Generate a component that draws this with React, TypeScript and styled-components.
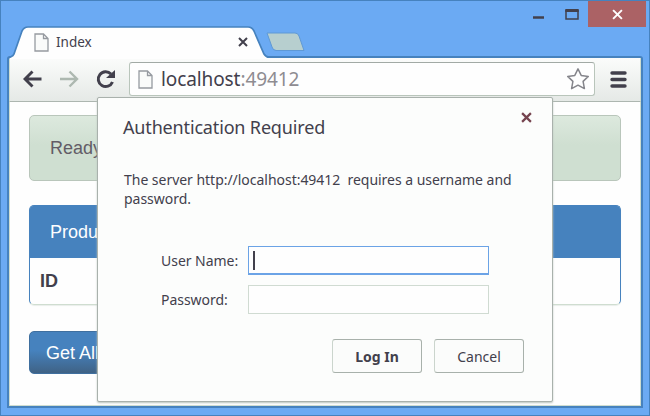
import React from "react";
import styled, { createGlobalStyle } from "styled-components";

const GlobalStyle = createGlobalStyle`
  * { box-sizing: border-box; }
  html, body { margin: 0; padding: 0; }
  body { width: 650px; height: 416px; overflow: hidden; }
`;

const ui = `"Noto Sans", "Open Sans", sans-serif`;
const ink = "#42404c";

const BrowserWindow = styled.div`
  position: relative;
  width: 650px;
  height: 416px;
  display: flex;
  flex-direction: column;
  background: #6baaf3;
  border: 1px solid #4682be;
  padding: 0 6px 7px 6px;
  font-family: ${ui};
  color: ${ink};
`;

const TitleBar = styled.header`
  height: 55px;
  flex: none;
  display: flex;
  justify-content: space-between;
`;

const TabStrip = styled.div`
  display: flex;
  align-items: flex-end;
`;

const Tab = styled.div`
  position: relative;
  z-index: 1;
  width: 262px;
  height: 32px;
  margin-bottom: -2px;
  display: flex;
  align-items: center;
  padding: 0 21px 0 27px;
`;

const TabShape = styled.svg`
  position: absolute;
  left: 0;
  top: 0;
`;

const TabTitle = styled.span`
  position: relative;
  flex: 1;
  margin-left: 7px;
  font-size: 13.5px;
  line-height: 18px;
`;

const Icon = styled.svg`
  position: relative;
  display: block;
  flex: none;
`;

const NewTab = styled.svg`
  display: block;
  margin: 0 0 4px -4px;
`;

const WindowControls = styled.div`
  display: flex;
  align-items: flex-start;
  margin-right: -3px;
`;

const WindowButton = styled.div<{ $w: number; $danger?: boolean }>`
  width: ${(p) => p.$w}px;
  height: 26px;
  display: flex;
  align-items: center;
  justify-content: center;
  background: ${(p) => (p.$danger ? "#ab6265" : "transparent")};
`;

const Client = styled.div`
  flex: 1;
  min-height: 0;
  display: flex;
  flex-direction: column;
  background: #fefefe;
  border: 2px solid #4682be;
  border-radius: 3px 3px 0 0;
`;

const Toolbar = styled.nav`
  height: 44px;
  flex: none;
  display: flex;
  align-items: center;
  padding: 0 13px 1px 13px;
  background: linear-gradient(#fbfcfb, #e5e9e6);
  border-bottom: 1px solid #adb6b0;
  border-left: 1px solid #cfddd0;
  border-right: 1px solid #cfddd0;
`;

const AddressBar = styled.div`
  flex: 1;
  height: 34px;
  margin: 0 15px 0 10px;
  display: flex;
  align-items: center;
  padding: 0 4px 0 8px;
  background: #fefefe;
  border: 1px solid #b9c5bb;
  border-top-color: #a2aaa5;
  border-radius: 3px;
`;

const Url = styled.span`
  flex: 1;
  margin-left: 8px;
  font-size: 19px;
  line-height: 24px;
  letter-spacing: -0.1px;
`;

const Port = styled.span`
  color: #8e8c91;
`;

const Page = styled.main`
  flex: 1;
  min-height: 0;
  display: flex;
  flex-direction: column;
  align-items: stretch;
  padding: 13px 19px 0 19px;
  border: solid #cfddd0;
  border-width: 0 1px 1px;
  font-family: "Liberation Sans", sans-serif;
  font-size: 18px;
  line-height: 22px;
`;

const Notice = styled.div`
  height: 66px;
  flex: none;
  padding: 21px 20px;
  color: #625c66;
  background: linear-gradient(#dde9de, #cfdfd1 45%);
  border: 1px solid #b9c6bb;
  border-radius: 5px;
`;

const Panel = styled.section`
  height: 100px;
  flex: none;
  margin-top: 24px;
  border: 1px solid #4682be;
  border-bottom-color: #cfddd0;
  border-radius: 5px;
  box-shadow: 0 1px 1px #e9eeea;
`;

const PanelHeading = styled.div`
  height: 52px;
  padding: 15px 20px;
  color: #fefefe;
  background: #4682be;
  border-radius: 3px 3px 0 0;
`;

const ColumnHeading = styled.div`
  padding: 12px 10px;
  font-weight: bold;
`;

const PrimaryButton = styled.button`
  width: 90px;
  height: 43px;
  margin-top: 26px;
  flex: none;
  padding: 0 0 0 16px;
  text-align: left;
  white-space: nowrap;
  overflow: hidden;
  font: inherit;
  color: #fefefe;
  background: linear-gradient(#4682be 45%, #3f6285);
  border: 1px solid #3f6f9f;
  border-radius: 5px;
`;

const Dialog = styled.section`
  position: absolute;
  left: 96px;
  top: 96px;
  width: 456px;
  height: 305px;
  display: flex;
  flex-direction: column;
  padding: 14px 28px 0 25px;
  background: #fcfdfc;
  border: 1px solid #a9b1ac;
  border-radius: 2px;
  box-shadow: 0 1px 2px #bcc5be;
`;

const DialogHeader = styled.div`
  display: flex;
  justify-content: space-between;
`;

const DialogTitle = styled.h1`
  margin: 0;
  font-size: 18px;
  font-weight: 400;
  line-height: 30px;
  letter-spacing: -0.16px;
`;

const CloseButton = styled.div`
  width: 11px;
  margin-right: -8px;
`;

const Message = styled.p`
  margin: 28px 0 0 1px;
  font-size: 14px;
  line-height: 19px;
  letter-spacing: -0.03px;
  white-space: pre;
`;

const Form = styled.div`
  display: flex;
  flex-direction: column;
  gap: 10px;
  margin: 38px 0 0 38px;
`;

const Field = styled.label`
  display: flex;
  align-items: center;
  font-size: 14px;
  letter-spacing: -0.03px;
`;

const FieldLabel = styled.span`
  width: 87px;
  white-space: nowrap;
`;

const Entry = styled.span<{ $focused?: boolean }>`
  width: 241px;
  height: 29px;
  display: flex;
  align-items: center;
  padding-left: 4px;
  background: #fefefe;
  border: 1px solid ${(p) => (p.$focused ? "#6ba3e6" : "#d0dbd2")};
  border-bottom-width: ${(p) => (p.$focused ? 2 : 1)}px;
`;

const Caret = styled.span`
  width: 2px;
  height: 19px;
  background: ${ink};
`;

const Actions = styled.div`
  display: flex;
  justify-content: flex-end;
  gap: 12px;
  margin-top: 25px;
`;

const DialogButton = styled.button<{ $primary?: boolean }>`
  width: 90px;
  height: 34px;
  padding: 0;
  font-family: ${ui};
  font-size: 14px;
  font-weight: ${(p) => (p.$primary ? 700 : 400)};
  color: ${ink};
  background: #fbfcfb;
  border: 1px solid #a8b1ab;
  border-left-color: #cbd5cd;
  border-radius: 3px;
`;

const PageIcon = () => (
  <Icon width="15" height="19" viewBox="0 0 15 19" fill="#fafbfa" stroke="#969aa0" strokeWidth="1.3">
    <path d="M1 1H9.5L14 5.5V18H1Z M9.5 1V5.5H14" />
  </Icon>
);

const Cross = ({ size, color, weight }: { size: number; color: string; weight: number }) => (
  <Icon width={size} height={size} viewBox="0 0 10 10" stroke={color} strokeWidth={weight} fill="none">
    <path d="M1 1L9 9M9 1L1 9" />
  </Icon>
);

export default function App() {
  return (
    <BrowserWindow>
      <GlobalStyle />
      <TitleBar>
        <TabStrip>
          <Tab>
            <TabShape width="262" height="33" viewBox="0 0 262 33">
              <path
                d="M1 33C2 31 6 31 7 28L15 5Q17 1 21 1H241Q245 1 247 5L257 28Q259 32 262 33Z"
                fill="#fefefe"
              />
              <path
                d="M1 33C2 31 6 31 7 28L15 5Q17 1 21 1H241Q245 1 247 5L257 28Q259 31 262 31"
                fill="none"
                stroke="#4682be"
                strokeWidth="1.7"
              />
            </TabShape>
            <PageIcon />
            <TabTitle>Index</TabTitle>
            <Cross size={10} color={ink} weight={2} />
          </Tab>
          <NewTab width="41" height="20" viewBox="0 0 41 20">
            <path d="M2 1H30Q33 1 34 4L39 18H11Q8 18 7 15Z" fill="#b7cfcf" />
            <path d="M2 1L7 15Q8 18.5 11 18.5H39L34 4Q33 1 30 1Z" fill="none" stroke="#5f99d5" />
          </NewTab>
        </TabStrip>
        <WindowControls>
          <WindowButton $w={34}>
            <Icon width="11" height="10" viewBox="0 0 11 10">
              <path d="M0 8.5H11" stroke={ink} strokeWidth="2.5" />
            </Icon>
          </WindowButton>
          <WindowButton $w={33}>
            <Icon width="14" height="11" viewBox="0 0 14 11" fill="none" stroke={ink}>
              <path d="M1 1V10H13V1" strokeWidth="1.5" />
              <path d="M.3 1.5H13.7" strokeWidth="3" />
            </Icon>
          </WindowButton>
          <WindowButton $w={58} $danger>
            <Cross size={11} color="#fefefe" weight={1.8} />
          </WindowButton>
        </WindowControls>
      </TitleBar>
      <Client>
        <Toolbar>
          <Icon width="96" height="22" viewBox="0 0 96 22" fill="none">
            <path d="M18.5 11H2M9.5 3.5L2 11L9.5 18.5" stroke={ink} strokeWidth="2.9" />
            <path d="M37 11H54M46.5 3.5L54 11L46.5 18.5" stroke="#adb8b0" strokeWidth="2.4" />
            <path d="M88 6A7.4 7.4 0 1 0 89.5 14" stroke={ink} strokeWidth="3" />
            <path d="M83 10H92V2Z" fill={ink} />
          </Icon>
          <AddressBar>
            <PageIcon />
            <Url>
              localhost<Port>:49412</Port>
            </Url>
            <Icon width="24" height="24" viewBox="0 0 24 24" fill="#fefefe" stroke="#85858b" strokeWidth="1.5">
              <path
                strokeLinejoin="round"
                d="M12 1.8L15.2 8.4L22.3 9.4L17.1 14.4L18.4 21.6L12 18.2L5.6 21.6L6.9 14.4L1.7 9.4L8.8 8.4Z"
              />
            </Icon>
          </AddressBar>
          <Icon width="17" height="17" viewBox="0 0 17 17" stroke={ink} strokeWidth="3.4" strokeLinecap="round">
            <path d="M2 2H15M2 8.5H15M2 15H15" />
          </Icon>
        </Toolbar>
        <Page>
          <Notice>Ready</Notice>
          <Panel>
            <PanelHeading>Products</PanelHeading>
            <ColumnHeading>ID</ColumnHeading>
          </Panel>
          <PrimaryButton>Get All</PrimaryButton>
        </Page>
      </Client>
      <Dialog>
        <DialogHeader>
          <DialogTitle>Authentication Required</DialogTitle>
          <CloseButton>
            <Cross size={11} color="#76444f" weight={2} />
          </CloseButton>
        </DialogHeader>
        <Message>{"The server http://localhost:49412  requires a username and\npassword."}</Message>
        <Form>
          <Field>
            <FieldLabel>User Name:</FieldLabel>
            <Entry $focused>
              <Caret />
            </Entry>
          </Field>
          <Field>
            <FieldLabel>Password:</FieldLabel>
            <Entry />
          </Field>
        </Form>
        <Actions>
          <DialogButton $primary>Log In</DialogButton>
          <DialogButton>Cancel</DialogButton>
        </Actions>
      </Dialog>
    </BrowserWindow>
  );
}
